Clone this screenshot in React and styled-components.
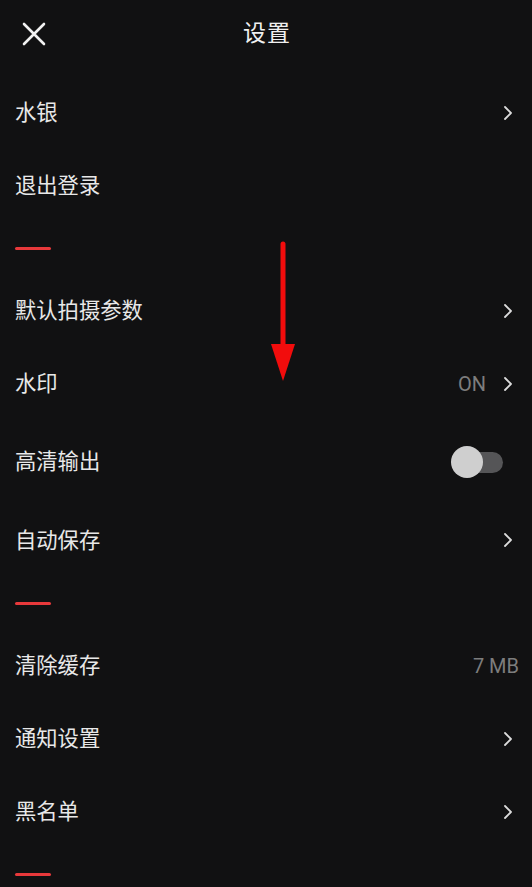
import React from 'react'
import styled, { createGlobalStyle } from 'styled-components';

const Global = createGlobalStyle`
  html, body { margin: 0; padding: 0; background: #111112; }
  body { font-family: "Noto Sans CJK SC", "Noto Sans", sans-serif; }
`;

const Page = styled.div`
  position: relative;
  width: 532px;
  height: 887px;
  overflow: hidden;
  background: #111112;
  color: #e6e6e6;
`;

const Header = styled.div`
  position: relative;
  display: flex;
  align-items: center;
  justify-content: center;
  height: 66px;
  box-sizing: border-box;
  padding-bottom: 5px;
`;

const Close = styled.div`
  position: absolute;
  left: 20px;
  top: 20px;
  width: 28px;
  height: 28px;
  display: flex;
`;

const Title = styled.div`
  font-size: 23px;
  color: #f0f0f0;
  letter-spacing: 1px;
  margin-left: 2px;
`;

const List = styled.div`
  display: flex;
  flex-direction: column;
  padding-top: 10px;
`;

const Row = styled.div`
  display: flex;
  align-items: center;
  height: ${({ h }) => h || 73}px;
  padding: 0 ${({ pr }) => pr || 20}px 0 15px;
`;

const Label = styled.div`
  flex: 1;
  font-size: 21.3px;
  color: #e8e8e8;
  margin-bottom: 4px;
`;

const Value = styled.div`
  font-family: "Roboto", "Noto Sans", sans-serif;
  font-size: 20px;
  color: #7d7d7d;
  margin-right: ${({ gap }) => gap || 0}px;
`;

const Divider = styled.div`
  height: 52px;
  display: flex;
  align-items: center;
  padding-left: 15px;
  &::before {
    content: '';
    width: 36px;
    height: 3px;
    border-radius: 2px;
    background: #e8393b;
  }
`;

const Toggle = styled.div`
  position: relative;
  width: 52px;
  height: 32px;
`;

const Track = styled.div`
  position: absolute;
  left: 17px;
  top: 6px;
  width: 35px;
  height: 21px;
  border-radius: 11px;
  background: #555557;
`;

const Knob = styled.div`
  position: absolute;
  left: 0;
  top: 0;
  width: 32px;
  height: 32px;
  border-radius: 50%;
  background: #cfcfcf;
`;

const Arrow = styled.svg`
  position: absolute;
  left: 268px;
  top: 240px;
`;

const Chevron = () => (
  <svg width="8" height="14" viewBox="0 0 8 14">
    <path d="M1 1 L7 7 L1 13" fill="none" stroke="#dcdcdc" strokeWidth="1.8" strokeLinecap="round" strokeLinejoin="round" />
  </svg>
);

const rows = [
  { label: '水银', chevron: true },
  { label: '退出登录' },
  'div',
  { label: '默认拍摄参数', chevron: true },
  { label: '水印', value: 'ON', chevron: true },
  { label: '高清输出', toggle: true, h: 83, pr: 29 },
  { label: '自动保存', chevron: true, h: 74 },
  'div',
  { label: '清除缓存', value: '7 MB', pr: 13 },
  { label: '通知设置', chevron: true },
  { label: '黑名单', chevron: true },
  'div',
];

const App = () => {
  return (
    <Page>
      <Global />
      <Header>
        <Close>
          <svg width="28" height="28" viewBox="0 0 28 28">
            <path d="M4 4 L24 24 M24 4 L4 24" stroke="#f2f2f2" strokeWidth="2.6" strokeLinecap="round" />
          </svg>
        </Close>
        <Title>设置</Title>
      </Header>
      <List>
        {rows.map((r, i) =>
          r === 'div' ? (
            <Divider key={i} />
          ) : (
            <Row key={i} h={r.h} pr={r.pr}>
              <Label>{r.label}</Label>
              {r.value && <Value gap={r.chevron ? 18 : 0}>{r.value}</Value>}
              {r.chevron && <Chevron />}
              {r.toggle && (
                <Toggle>
                  <Track />
                  <Knob />
                </Toggle>
              )}
            </Row>
          )
        )}
      </List>
      <Arrow width="30" height="145" viewBox="0 0 30 145">
        <line x1="15" y1="4" x2="15" y2="110" stroke="#f20c0c" strokeWidth="5" strokeLinecap="round" />
        <polygon points="3,104 27,104 15,141" fill="#f20c0c" />
      </Arrow>
    </Page>
  )
}

export default App
